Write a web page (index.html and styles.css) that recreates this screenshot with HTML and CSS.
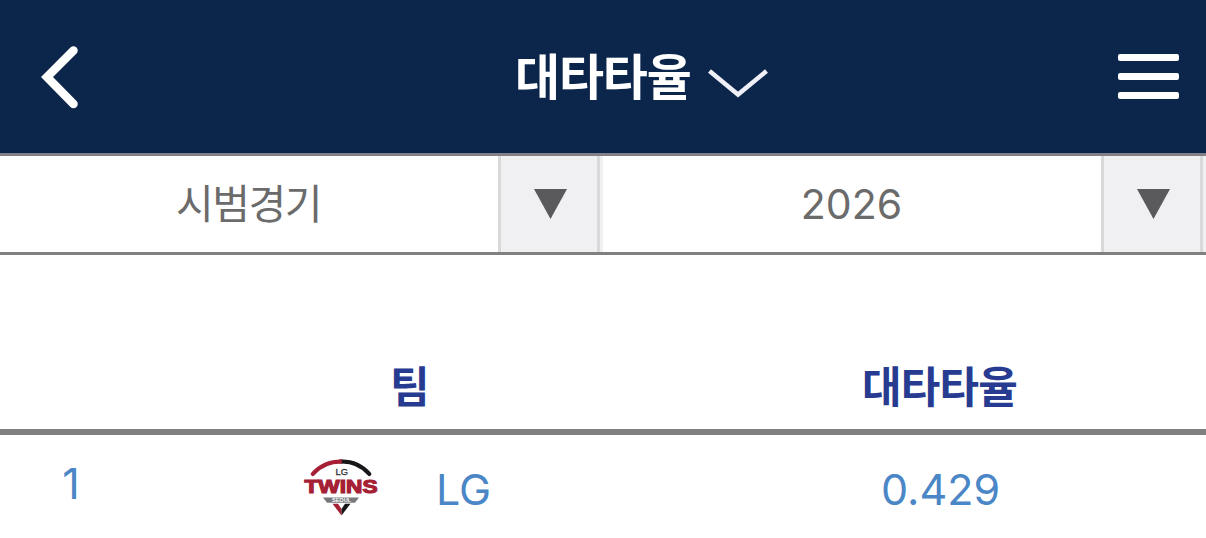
FILE: index.html
```html
<!DOCTYPE html>
<html lang="ko">
<head>
    <meta charset="UTF-8">
    <title>대타타율</title>
    <link rel="stylesheet" href="styles.css">
</head>
<body>
    <header class="top-bar">
        <svg class="back-icon" width="44" height="66" viewBox="0 0 44 66">
            <path d="M34.5 6.5 L8 33 L34.5 60" />
        </svg>
        <h1 class="title">
            <span class="title-text">대타타율</span>
            <svg class="title-arrow" width="60" height="30" viewBox="0 0 60 30">
                <path d="M1.5 2 L30 25.5 L58.5 2" />
            </svg>
        </h1>
        <div class="menu-icon"><span></span><span></span><span></span></div>
    </header>

    <div class="filters">
        <div class="select">
            <div class="select-value korean">시범경기</div>
            <div class="select-button">
                <svg width="33" height="30" viewBox="0 0 33 30"><path d="M0 0 H33 L16.5 30 Z" /></svg>
            </div>
        </div>
        <div class="select">
            <div class="select-value">2026</div>
            <div class="select-button">
                <svg width="33" height="30" viewBox="0 0 33 30"><path d="M0 0 H33 L16.5 30 Z" /></svg>
            </div>
        </div>
    </div>

    <main class="ranking">
        <div class="row head">
            <div></div>
            <div class="head-team">팀</div>
            <div class="head-record">대타타율</div>
        </div>
        <div class="row">
            <div class="rank">1</div>
            <div class="team">
                <svg class="team-logo" width="76" height="60" viewBox="0 0 76 60">
                    <path d="M9.8 17 C17 8.5 27 4.5 38.7 4.5" fill="none" stroke="#a52035" stroke-width="4.2" stroke-linecap="round" />
                    <path d="M38.7 4.5 C49 4.5 59 8.5 66.3 17" fill="none" stroke="#17171a" stroke-width="4.2" stroke-linecap="round" />
                    <path d="M36 4.5 H38.7" stroke="#a52035" stroke-width="4.2" />
                    <text x="32.5" y="17.8" class="logo-lg" textLength="12.5" lengthAdjust="spacingAndGlyphs">LG</text>
                    <text x="1.5" y="35.5" class="logo-twins" textLength="73" lengthAdjust="spacingAndGlyphs">TWINS</text>
                    <path d="M20 40.5 H56 L52 45.8 H24 Z" fill="#77787b" />
                    <text x="29" y="44.8" class="logo-seoul" textLength="19" lengthAdjust="spacingAndGlyphs">SEOUL</text>
                    <path d="M29.5 46.8 H35 L38.5 52 V58.5 Z" fill="#a52035" />
                    <path d="M47.5 46.8 H42 L38.5 52 V58.5 Z" fill="#17171a" />
                </svg>
                <span class="team-name">LG</span>
            </div>
            <div class="record">0.429</div>
        </div>
    </main>
</body>
</html>
```
FILE: styles.css
```css
* {
    box-sizing: border-box;
}

body {
    margin: 0;
    background: #ffffff;
    font-family: Inter, "Noto Sans CJK KR", sans-serif;
    overflow: hidden;
}

.top-bar {
    height: 156px;
    display: grid;
    grid-template-columns: 200px 1fr 200px;
    align-items: center;
    background: #0c254b;
    border-bottom: 3px solid #808186;
}

.back-icon {
    margin-left: 39px;
}

.back-icon path {
    fill: none;
    stroke: #ffffff;
    stroke-width: 8.5;
    stroke-linecap: round;
    stroke-linejoin: miter;
}

.title {
    margin: 0;
    display: flex;
    align-items: center;
    padding-left: 315px;
    font-family: "Noto Sans CJK KR", sans-serif;
    font-size: 49px;
    line-height: 70px;
    font-weight: 700;
    letter-spacing: -1.2px;
    color: #ffffff;
    white-space: nowrap;
}

.title-text {
    padding-bottom: 6px;
}

.title-arrow {
    margin: 14px 0 0 17px;
}

.title-arrow path {
    fill: none;
    stroke: #efeff7;
    stroke-width: 4.5;
}

.menu-icon {
    justify-self: end;
    width: 61px;
    height: 45px;
    margin-right: 27px;
    display: flex;
    flex-direction: column;
    justify-content: space-between;
}

.menu-icon span {
    height: 7px;
    border-radius: 2px;
    background: #ffffff;
}

.filters {
    height: 99px;
    display: flex;
    border-bottom: 3px solid #808080;
}

.select {
    width: 603px;
    display: flex;
    border-right: 3px solid #f0f0f2;
}

.select-value {
    flex: 1;
    padding-right: 1px;
    text-align: center;
    font-size: 41px;
    line-height: 96px;
    color: #6b6b6b;
}

.korean {
    font-family: "Noto Sans CJK KR", sans-serif;
    line-height: 90px;
    letter-spacing: -1.5px;
}

.select-button {
    width: 102px;
    padding-left: 2px;
    display: flex;
    align-items: center;
    justify-content: center;
    background: #f0f0f2;
    border: solid #d9d9da;
    border-width: 0 3px;
}

.select-button path {
    fill: #5a595b;
}

.row {
    display: grid;
    grid-template-columns: 144px 531px 531px;
    text-align: center;
    font-size: 43px;
    line-height: 108px;
    color: #4b86c6;
}

.head {
    height: 180px;
    padding-top: 75px;
    border-bottom: 6px solid #808080;
    font-family: "Noto Sans CJK KR", sans-serif;
    font-weight: 700;
    line-height: 108px;
    letter-spacing: -0.8px;
    color: #273b91;
}

.head-record {
    padding-right: 2px;
}

.rank {
    padding-right: 2px;
    line-height: 97px;
}

.team {
    display: flex;
    align-items: flex-start;
    padding-left: 159px;
}

.team-logo {
    margin: 22px 57px 0 0;
}

.logo-lg {
    font: 9px "Liberation Sans", sans-serif;
    fill: #333333;
    stroke: #333333;
    stroke-width: 0.3;
}

.logo-twins {
    font: 700 17.5px "Liberation Sans", sans-serif;
    fill: #a52035;
    stroke: #a52035;
    stroke-width: 1.1;
}

.logo-seoul {
    font: 700 4.5px "Liberation Sans", sans-serif;
    fill: #ffffff;
}
```
